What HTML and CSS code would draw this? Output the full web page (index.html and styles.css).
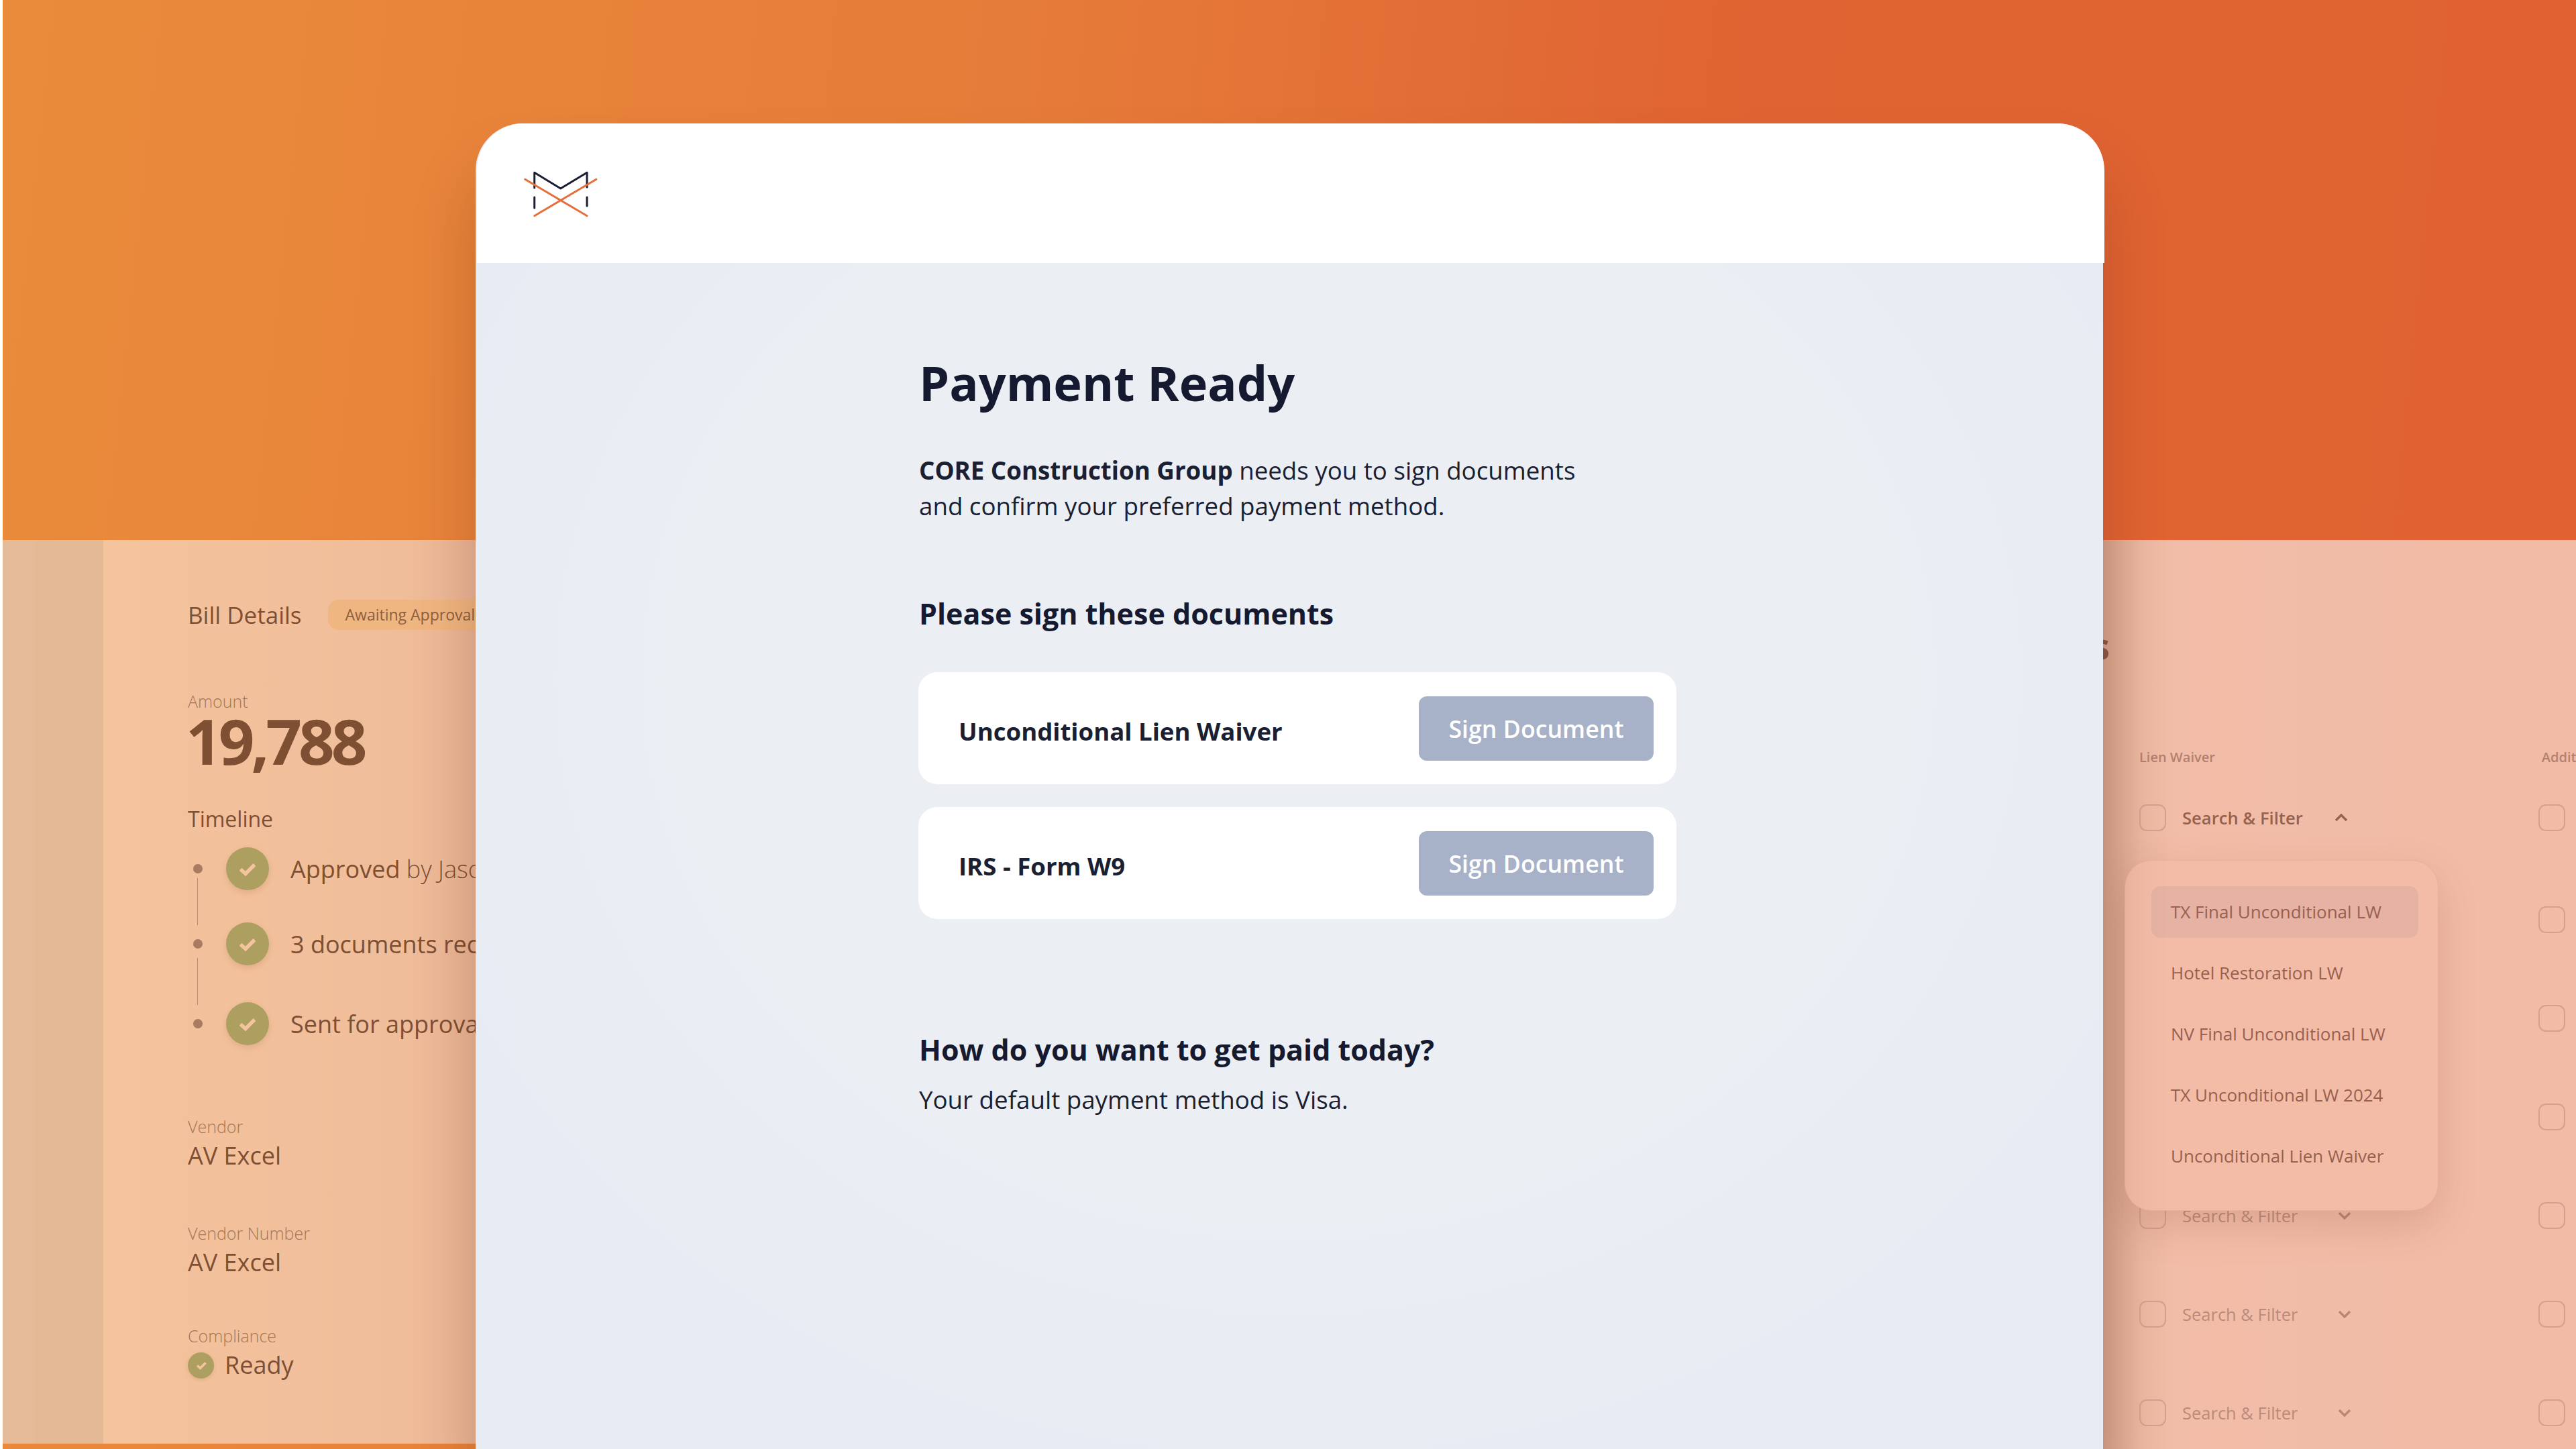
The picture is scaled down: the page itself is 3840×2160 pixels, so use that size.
FILE: index.html
```html
<!DOCTYPE html>
<html lang="en">
<head>
  <meta charset="UTF-8">
  <meta name="viewport" content="width=device-width,initial-scale=1.0">
  <title>Payment Ready</title>
  <link rel="stylesheet" href="styles.css">
</head>
<body>
  <div class="stage">
    <!-- bill details behind the card -->
    <div class="bill-panel">
      <div class="bill-side"></div>
      <div class="bill-main">
        <div class="bill-head">
          <span class="bill-title">Bill Details</span>
          <span class="bill-pill">Awaiting Approval</span>
        </div>
        <div class="field-label amount-label">Amount</div>
        <div class="amount">19,788</div>
        <div class="timeline-title">Timeline</div>
        <div class="tl-row tl-first">
          <span class="tl-dot"></span>
          <span class="tl-check">
            <svg viewBox="0 0 24 24"><path d="M5 12.5l5 4.5 9-9"/></svg>
          </span>
          <span class="tl-text"><b>Approved</b> by Jason Miller</span>
        </div>
        <div class="tl-row tl-second">
          <span class="tl-dot"></span>
          <span class="tl-check">
            <svg viewBox="0 0 24 24"><path d="M5 12.5l5 4.5 9-9"/></svg>
          </span>
          <span class="tl-text"><b>3 documents received</b></span>
        </div>
        <div class="tl-row tl-third">
          <span class="tl-dot"></span>
          <span class="tl-check">
            <svg viewBox="0 0 24 24"><path d="M5 12.5l5 4.5 9-9"/></svg>
          </span>
          <span class="tl-text"><b>Sent for approval</b></span>
        </div>
        <div class="field-label vendor-label">Vendor</div>
        <div class="field-value">AV Excel</div>
        <div class="field-label number-label">Vendor Number</div>
        <div class="field-value">AV Excel</div>
        <div class="field-label compliance-label">Compliance</div>
        <div class="field-value ready">
          <span class="ready-check">
            <svg viewBox="0 0 24 24"><path d="M6 12.5l4.5 4 8-8"/></svg>
          </span>
          Ready
        </div>
      </div>
    </div>

    <!-- main card -->
    <div class="card">
      <div class="card-header">
        <svg class="logo" viewBox="0 0 120 80">
          <path class="logo-m" d="M16.7 60V44M16.7 30V7.3L55.7 31 95 7.3V29M95 44V57"/>
          <path class="logo-x" d="M2.7 17.3L95 71.7M108.900 17.3L16.700 71.700"/>
        </svg>
      </div>
      <div class="card-body">
        <h1>Payment Ready</h1>
        <p class="intro"><b>CORE Construction Group</b> needs you to sign documents<br>and confirm your preferred payment method.</p>
        <h2 class="sign-title">Please sign these documents</h2>
        <div class="doc-row">
          <span class="doc-name">Unconditional Lien Waiver</span>
          <button class="sign-btn">Sign Document</button>
        </div>
        <div class="doc-row">
          <span class="doc-name">IRS - Form W9</span>
          <button class="sign-btn">Sign Document</button>
        </div>
        <h2 class="paid-title">How do you want to get paid today?</h2>
        <p class="paid-text">Your default payment method is Visa.</p>
      </div>
    </div>

    <!-- documents table behind the card -->
    <div class="docs-panel">
      <div class="docs-title"><span>Documents</span></div>
      <div class="docs-labels">
        <span>Lien Waiver</span>
        <span class="additional">Additional</span>
      </div>
      <div class="docs-rows">
        <div class="docs-row open">
          <div class="docs-col">
            <span class="box"></span>
            <span class="search">Search &amp; Filter</span>
            <svg class="chev" viewBox="0 0 20 12"><path d="M2 10l8-8 8 8"/></svg>
          </div>
          <span class="box"></span>
        </div>
        <!-- these three sit under the dropdown -->
        <div class="docs-row">
          <div class="docs-col"></div>
          <span class="box"></span>
        </div>
        <div class="docs-row">
          <div class="docs-col"></div>
          <span class="box"></span>
        </div>
        <div class="docs-row">
          <div class="docs-col"></div>
          <span class="box"></span>
        </div>
        <div class="docs-row">
          <div class="docs-col">
            <span class="box"></span>
            <span class="search">Search &amp; Filter</span>
            <svg class="chev" viewBox="0 0 20 12"><path d="M2 2l8 8 8-8"/></svg>
          </div>
          <span class="box"></span>
        </div>
        <div class="docs-row">
          <div class="docs-col">
            <span class="box"></span>
            <span class="search">Search &amp; Filter</span>
            <svg class="chev" viewBox="0 0 20 12"><path d="M2 2l8 8 8-8"/></svg>
          </div>
          <span class="box"></span>
        </div>
        <div class="docs-row">
          <div class="docs-col">
            <span class="box"></span>
            <span class="search">Search &amp; Filter</span>
            <svg class="chev" viewBox="0 0 20 12"><path d="M2 2l8 8 8-8"/></svg>
          </div>
          <span class="box"></span>
        </div>
      </div>
      <div class="dropdown">
        <div class="dropdown-item selected">TX Final Unconditional LW</div>
        <div class="dropdown-item">Hotel Restoration LW</div>
        <div class="dropdown-item">NV Final Unconditional LW</div>
        <div class="dropdown-item">TX Unconditional LW 2024</div>
        <div class="dropdown-item">Unconditional Lien Waiver</div>
      </div>
    </div>
  </div>
</body>
</html>
```

FILE: styles.css
```css
* {
  box-sizing: border-box;
}
html, body {
  margin: 0;
  padding: 0;
  background: #fff;
  overflow: hidden;
}
body {
  font-family: "Open Sans", "Noto Sans", sans-serif;
  color: #1a1f33;
}
.stage {
  width: 3836px;
  height: 2160px;
  margin-left: 4px;
  display: grid;
  grid-template-columns: 705px 2426px 705px;
  grid-template-rows: 805px 1fr;
  background: linear-gradient(96deg, #ea8b3b 0%, #e67c39 38%, #e06533 62%, #e06232 100%);
}

/* bill panel */
.bill-panel {
  grid-column: 1;
  grid-row: 2;
  display: flex;
  height: 1347px;
  overflow: hidden;
  color: #7e4f33;
  background: linear-gradient(90deg, #f4c49d 20%, #f0bd9a 85%, #ebb697 100%);
}
.bill-side {
  flex: 0 0 150px;
  background: linear-gradient(90deg, #e5ba98 0 48px, #e4b996 48px);
}
.bill-main {
  flex: 1;
  padding: 89px 0 0 126px;
  white-space: nowrap;
}
.bill-head {
  display: flex;
  align-items: center;
  gap: 39px;
}
.bill-title {
  font-size: 35px;
  font-weight: 500;
  line-height: 45px;
}
.bill-pill {
  height: 45px;
  line-height: 45px;
  padding: 0 26px;
  border-radius: 16px;
  font-size: 23px;
  color: #8d6040;
  background: #f0b681;
}
.field-label {
  font-size: 25px;
  font-weight: 300;
  line-height: 30px;
  color: #a47657;
}
.amount-label {
  margin-top: 91px;
}
.amount {
  font-size: 94px;
  font-weight: 700;
  line-height: 88px;
  letter-spacing: -5px;
  margin-left: -3px;
}
.timeline-title {
  margin-top: 50px;
  font-size: 32px;
  font-weight: 500;
  line-height: 46px;
}
.tl-row {
  display: flex;
  align-items: center;
  height: 64px;
}
.tl-first {
  margin-top: 19px;
}
.tl-second {
  margin-top: 48px;
}
.tl-third {
  margin-top: 55px;
}
.tl-dot {
  position: relative;
  width: 14px;
  height: 14px;
  margin-left: 8px;
  border-radius: 50%;
  background: #a97b60;
}
.tl-first .tl-dot::after,
.tl-second .tl-dot::after {
  content: "";
  position: absolute;
  left: 6px;
  top: 21px;
  width: 1px;
  height: 70px;
  background: #b98a6c;
}
.tl-second .tl-dot::after {
  top: 28px;
}
.tl-check {
  width: 64px;
  height: 64px;
  margin-left: 35px;
  border-radius: 50%;
  background: #ad9f60;
  box-shadow: 0 4px 10px rgba(120, 70, 30, 0.15);
  display: flex;
  align-items: center;
  justify-content: center;
}
.tl-check svg {
  width: 36px;
  height: 36px;
}
.tl-check path,
.ready-check path {
  fill: none;
  stroke: #f4c49d;
  stroke-width: 3.6;
}
.tl-text {
  margin-left: 32px;
  font-size: 36px;
  font-weight: 300;
}
.tl-text b {
  font-weight: 500;
}
.vendor-label {
  margin-top: 106px;
}
.number-label {
  margin-top: 77px;
}
.compliance-label {
  margin-top: 71px;
}
.field-value {
  margin-top: 6px;
  font-size: 36px;
  font-weight: 500;
  line-height: 46px;
}
.ready {
  display: flex;
  align-items: center;
  gap: 16px;
}
.ready-check {
  width: 39px;
  height: 39px;
  border-radius: 50%;
  background: #ad9f60;
  box-shadow: 0 2px 6px rgba(120, 70, 30, 0.15);
  display: flex;
  align-items: center;
  justify-content: center;
}
.ready-check svg {
  width: 24px;
  height: 24px;
}

/* card */
.card {
  grid-column: 2;
  grid-row: 1 / 3;
  margin-top: 184px;
  position: relative;
  z-index: 1;
  display: flex;
  flex-direction: column;
  border-radius: 70px 70px 0 0;
  background: radial-gradient(ellipse 1500px 1300px at 50% 42%, #ebeff3 0%, #ebeef3 62%, #e6ebf4 100%) #e3e8f1;
  box-shadow: 0 70px 90px rgba(90, 40, 10, 0.26);
}
.card-header {
  height: 208px;
  margin: 0 -2px 0 2px;
  padding: 66px 0 0 69px;
  border-radius: 70px 70px 0 0;
  background: #fff;
}
.logo {
  display: block;
  width: 120px;
  height: 80px;
}
.logo path {
  fill: none;
  stroke-width: 3;
  stroke-linecap: round;
  stroke-linejoin: round;
}
.logo-m {
  stroke: #1a1f33;
}
.logo-x {
  stroke: #e56f3b;
}
.card-body {
  flex: 1;
  padding: 133px 0 0 661px;
}
h1 {
  margin: 0;
  font-size: 72px;
  font-weight: 700;
  line-height: 90px;
  color: #151a30;
}
.intro {
  margin: 60px 0 0;
  font-size: 36.7px;
  line-height: 53px;
}
.sign-title,
.paid-title {
  margin: 0;
  font-size: 43px;
  font-weight: 700;
  line-height: 60px;
  color: #151a30;
}
.sign-title {
  margin-top: 104px;
  margin-bottom: 57px;
}
.doc-row {
  width: 1130px;
  height: 167px;
  margin-bottom: 34px;
  margin-left: -1px;
  padding: 0 34px 0 60px;
  display: flex;
  align-items: center;
  justify-content: space-between;
  border-radius: 28px;
  background: #fff;
}
.doc-name {
  margin-top: 8px;
  font-size: 36.6px;
  font-weight: 700;
}
.sign-btn {
  width: 350px;
  height: 96px;
  border: none;
  border-radius: 12px;
  background: #a7b2c9;
  color: #fff;
  font-family: inherit;
  font-size: 35.7px;
  font-weight: 600;
}
.paid-title {
  margin-top: 165px;
}
.paid-text {
  margin: 18px 0 0;
  font-size: 36.7px;
  line-height: 52px;
}

/* documents panel */
.docs-panel {
  grid-column: 3;
  grid-row: 2;
  position: relative;
  overflow: hidden;
  padding: 127px 0 0 54px;
  color: #96614f;
  background: linear-gradient(90deg, #d8a48e 0, #ecb9a3 60px, #f2bda8 110px, #f1bba6 100%);
}
.docs-title {
  display: flex;
  justify-content: flex-end;
  width: 0;
  margin-left: -44px;
  height: 60px;
  font-size: 54px;
  font-weight: 700;
  line-height: 60px;
  color: #8a5648;
  white-space: nowrap;
}
.docs-labels {
  display: flex;
  width: 700px;
  margin-top: 122px;
  font-size: 20px;
  font-weight: 600;
  line-height: 30px;
  color: #b38172;
}
.additional {
  margin-left: 487px;
}
.docs-rows {
  margin-top: 55px;
  display: flex;
  flex-direction: column;
  gap: 107px;
}
.docs-row {
  display: flex;
  width: 700px;
  height: 40px;
}
.docs-row.open {
  margin-bottom: 5px;
}
.docs-col {
  flex: 0 0 595px;
  display: flex;
  align-items: center;
}
.box {
  flex: 0 0 40px;
  height: 40px;
  border: 2px solid #d6a091;
  border-radius: 11px;
}
.search {
  flex: 0 0 232px;
  margin-left: 24px;
  font-size: 25.500px;
  color: #ba8b7b;
}
.open .search {
  flex-basis: 227px;
  font-size: 25.6px;
  font-weight: 600;
  color: #95624f;
}
.chev {
  width: 20px;
  height: 12px;
  fill: none;
  stroke: #b98677;
  stroke-width: 3.4;
}
.open .chev {
  stroke: #95624f;
}
.dropdown {
  position: absolute;
  left: 32px;
  top: 477px;
  width: 468px;
  height: 523px;
  padding: 38px 29px 0 39px;
  display: flex;
  flex-direction: column;
  gap: 14px;
  border: 1px solid #e8af9b;
  border-radius: 40px;
  background: #f2bca7;
  box-shadow: 0 22px 60px rgba(130, 60, 40, 0.18);
}
.dropdown-item {
  flex: 0 0 77px;
  padding-left: 29px;
  border-radius: 14px;
  font-size: 26px;
  line-height: 77px;
  white-space: nowrap;
  color: #99604f;
}
.dropdown-item.selected {
  background: #e5b2a3;
}
```
